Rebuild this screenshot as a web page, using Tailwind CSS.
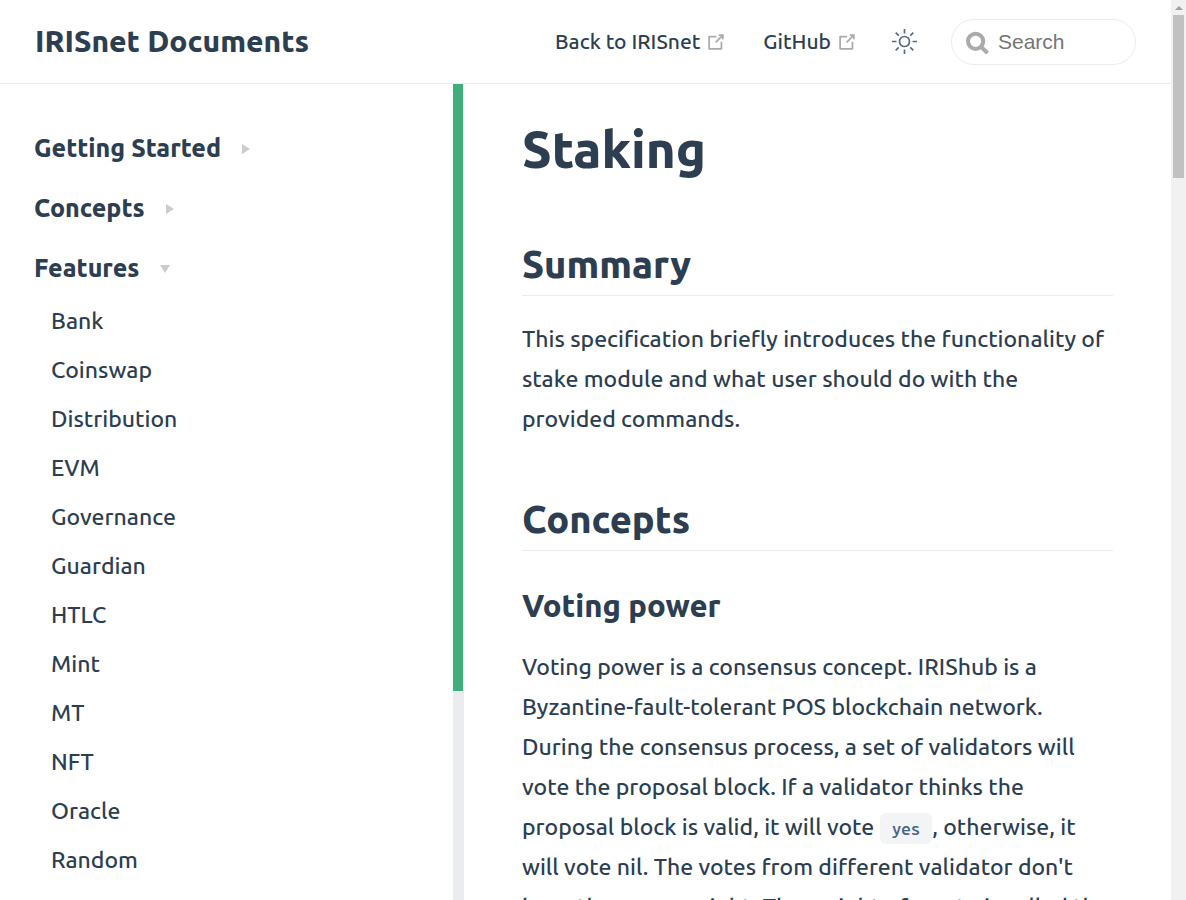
<!DOCTYPE html>
<html lang="en">
<head>
<meta charset="utf-8">
<meta name="viewport" content="width=device-width, initial-scale=1">
<title>Staking | IRISnet Documents</title>
<script src="https://cdn.jsdelivr.net/npm/@tailwindcss/browser@4"></script>
</head>
<body class="flex h-screen overflow-hidden bg-white font-[Ubuntu,'Noto_Sans',sans-serif] text-[23px] text-[#2c3e50]">
<div class="flex min-w-0 flex-1 flex-col">
  <header class="flex h-[84px] shrink-0 items-center justify-between border-b border-[#eaecef] px-[35px]">
    <a href="#" class="text-[30px] font-extrabold">IRISnet Documents</a>
    <div class="flex items-center">
      <nav class="flex items-center gap-9 text-[21px] font-medium">
        <a href="#" class="flex items-center gap-[5px]">Back to IRISnet
          <svg class="size-[22px] text-[#aaa]" viewBox="0 0 100 100" aria-hidden="true"><path fill="currentColor" d="M18.8,85.1h56l0,0c2.2,0,4-1.8,4-4v-32h-8v28h-48v-48h28v-8h-32l0,0c-2.2,0-4,1.8-4,4v56C14.8,83.3,16.6,85.1,18.8,85.1z"/><path fill="currentColor" d="M45.7,48.7 51.3,54.3 77.2,28.5 77.2,37.2 85.2,37.2 85.2,14.9 62.8,14.9 62.8,22.9 71.5,22.9z"/></svg>
        </a>
        <a href="#" class="flex items-center gap-[5px]">GitHub
          <svg class="size-[22px] text-[#aaa]" viewBox="0 0 100 100" aria-hidden="true"><path fill="currentColor" d="M18.8,85.1h56l0,0c2.2,0,4-1.8,4-4v-32h-8v28h-48v-48h28v-8h-32l0,0c-2.2,0-4,1.8-4,4v56C14.8,83.3,16.6,85.1,18.8,85.1z"/><path fill="currentColor" d="M45.7,48.7 51.3,54.3 77.2,28.5 77.2,37.2 85.2,37.2 85.2,14.9 62.8,14.9 62.8,22.9 71.5,22.9z"/></svg>
        </a>
      </nav>
      <button type="button" aria-label="Toggle colour mode" class="ml-[33px] text-[#5b6b7a]">
        <svg class="size-[26px]" viewBox="0 0 26 26" fill="none" stroke="currentColor" stroke-width="1.7" aria-hidden="true"><circle cx="13.500" cy="12.500" r="5"/><path d="M13.500 0v4.500M13.500 20.500v4.500M1 12.500h4.500M21.500 12.500h4.500M4.700 3.700l3 3M19.300 18.300l3 3M22.300 3.700l-3 3M7.700 18.300l-3 3"/></svg>
      </button>
      <label class="ml-[34px] flex h-[46px] w-[185px] items-center gap-2 rounded-full border border-[#eaecef] pl-[14px] pr-3">
        <svg class="size-6 shrink-0" viewBox="0 0 24 24" fill="none" stroke="#aaa" stroke-width="4" aria-hidden="true"><circle cx="9.600" cy="11.300" r="7.600"/><path d="M15 16.700l6.500 6.500"/></svg>
        <input type="text" placeholder="Search" aria-label="Search" class="w-full min-w-0 font-['Liberation_Sans',sans-serif] text-[21px] outline-none placeholder:text-[#757575]">
      </label>
    </div>
  </header>
  <div class="flex min-h-0 flex-1">
    <aside class="flex w-[464px] shrink-0">
      <nav class="flex-1 overflow-hidden pl-[34px] pt-[35px]">
        <button type="button" class="flex h-[60px] items-center gap-[21px] text-[25px] font-extrabold">Getting Started<span class="border-y-[5px] border-l-8 border-y-transparent border-l-[#ccc]"></span></button>
        <button type="button" class="flex h-[60px] items-center gap-[21px] text-[25px] font-extrabold">Concepts<span class="border-y-[5px] border-l-8 border-y-transparent border-l-[#ccc]"></span></button>
        <button type="button" class="flex h-[60px] items-center gap-[21px] text-[25px] font-extrabold">Features<span class="border-x-[5px] border-t-8 border-x-transparent border-t-[#ccc]"></span></button>
        <ul class="-mt-[3px] pl-[17px] font-medium leading-[49px] [font-variation-settings:'wght'_450]">
          <li><a href="#">Bank</a></li>
          <li><a href="#">Coinswap</a></li>
          <li><a href="#">Distribution</a></li>
          <li><a href="#">EVM</a></li>
          <li><a href="#">Governance</a></li>
          <li><a href="#">Guardian</a></li>
          <li><a href="#">HTLC</a></li>
          <li><a href="#">Mint</a></li>
          <li><a href="#">MT</a></li>
          <li><a href="#">NFT</a></li>
          <li><a href="#">Oracle</a></li>
          <li><a href="#">Random</a></li>
          <li><a href="#">Service</a></li>
        </ul>
      </nav>
      <div class="w-[11px] bg-[#eaecef]"><div class="mr-px h-[607px] bg-[#3eaf7c]"></div></div>
    </aside>
    <main class="min-w-0 flex-1 overflow-hidden px-[58px]">
      <h1 class="pt-[33px] text-[51px] font-extrabold leading-[64px]">Staking</h1>
      <h2 class="mt-[59px] border-b border-[#eaecef] pb-[7px] text-[38px] font-extrabold leading-[48px]">Summary</h2>
      <p class="mt-[23px] font-medium leading-[40px] [font-variation-settings:'wght'_450]">This specification briefly introduces the functionality of stake module and what user should do with the provided commands.</p>
      <h2 class="mt-[56px] border-b border-[#eaecef] pb-[7px] text-[38px] font-extrabold leading-[48px]">Concepts</h2>
      <h3 class="mt-[35px] text-[31px] font-extrabold leading-[40px]">Voting power</h3>
      <p class="mt-[21px] font-medium leading-[40px] [font-variation-settings:'wght'_450]">Voting power is a consensus concept. IRIShub is a Byzantine-fault-tolerant POS blockchain network. During the consensus process, a set of validators will vote the proposal block. If a validator thinks the proposal block is valid, it will vote <code class="rounded-md bg-[#f3f4f6] px-3 py-1.5 font-['Ubuntu_Mono','Noto_Sans',monospace] text-[17px] leading-none text-[#476582]">yes</code>, otherwise, it will vote nil. The votes from different validator don't have the same weight. The weight of a vote is called the voting power of the corresponding validator.</p>
    </main>
  </div>
</div>
<div class="flex w-[15px] shrink-0 flex-col items-center bg-[#f1f1f1]" aria-hidden="true">
  <div class="flex h-[15px] items-center"><span class="border-x-4 border-b-4 border-x-transparent border-b-[#a0a0a0]"></span></div>
  <div class="h-[163px] w-[11px] bg-[#c1c1c1]"></div>
</div>
</body>
</html>
